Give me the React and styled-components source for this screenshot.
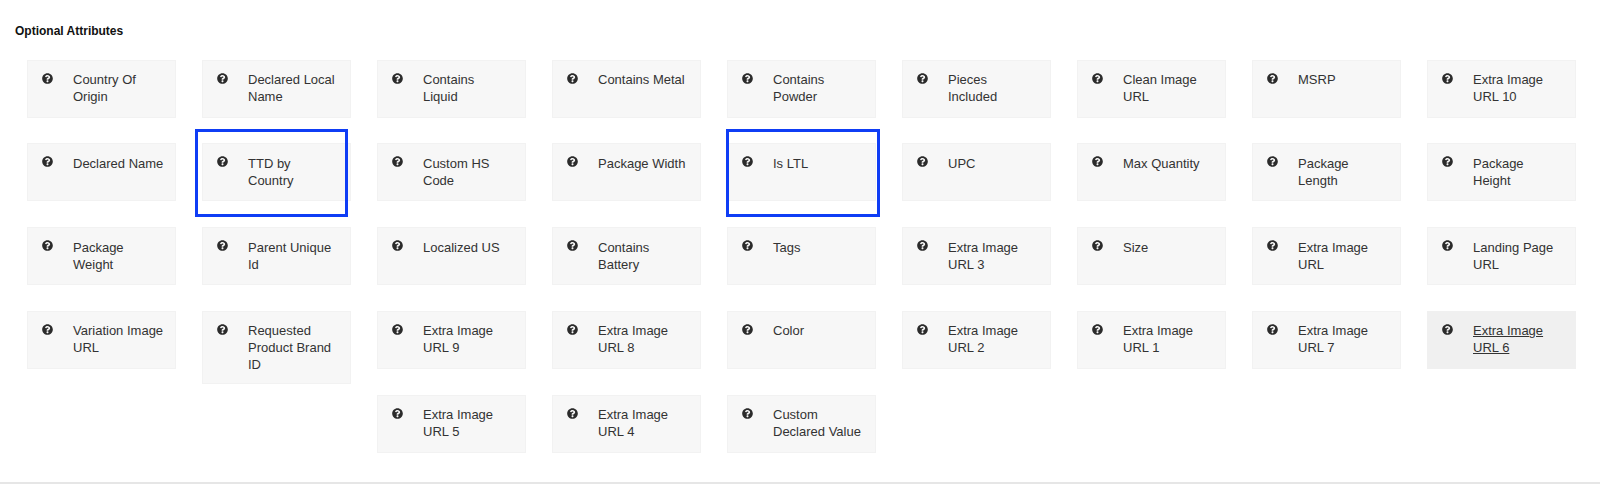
import styled, { createGlobalStyle } from "styled-components";
import { FaQuestionCircle } from "react-icons/fa";

const GlobalStyle = createGlobalStyle`
  html, body {
    margin: 0;
    background: #fff;
    font-family: "Liberation Sans", Arial, sans-serif;
  }
`;

const Page = styled.div`
  height: 486px;
  box-sizing: border-box;
  overflow: hidden;
  display: flex;
  flex-direction: column;
`;

const Title = styled.h2`
  margin: 0;
  padding: 24px 0 0 15px;
  height: 59.5px;
  box-sizing: border-box;
  font-size: 12px;
  line-height: 14px;
  font-weight: 700;
  color: #111;
`;

const Grid = styled.div`
  display: grid;
  grid-template-columns: repeat(9, 149px);
  grid-auto-rows: 58px;
  column-gap: 26px;
  row-gap: 25.8px;
  padding-left: 27px;
  flex: 1;
`;

const Card = styled.div`
  position: relative;
  align-self: start;
  grid-column: ${(p) => p.$column || "auto"};
  box-sizing: border-box;
  min-height: 58px;
  display: flex;
  gap: 20px;
  padding: 10.5px 11px 9.5px 14px;
  background: ${(p) => (p.$hovered ? "#f0f0f0" : "#f7f7f7")};
  border: 1px solid ${(p) => (p.$hovered ? "#f0f0f0" : "#f2f2f2")};
`;

const HelpIcon = styled(FaQuestionCircle)`
  flex: none;
  width: 11px;
  height: 11px;
  margin-top: 1.5px;
  color: #2b2b2b;
`;

const Label = styled.span`
  font-size: 13px;
  line-height: 17px;
  color: #333;
  white-space: pre-line;
  text-decoration: ${(p) => (p.$hovered ? "underline" : "none")};
`;

const Highlight = styled.div`
  position: absolute;
  top: -15px;
  bottom: -16.5px;
  left: ${(p) => p.$left}px;
  right: ${(p) => p.$right}px;
  border: 3px solid #0f3df5;
  pointer-events: none;
`;

const Footer = styled.div`
  height: 2px;
  margin-bottom: 2px;
  background: #e6e6e6;
`;

const attributes = [
  "Country Of Origin", "Declared Local Name", "Contains\nLiquid", "Contains Metal", "Contains Powder",
  "Pieces Included", "Clean Image URL", "MSRP", "Extra Image URL 10",
  "Declared Name", "TTD by Country", "Custom HS Code", "Package Width", "Is LTL",
  "UPC", "Max Quantity", "Package Length", "Package Height",
  "Package Weight", "Parent Unique Id", "Localized US", "Contains Battery", "Tags",
  "Extra Image URL 3", "Size", "Extra Image URL", "Landing Page URL",
  "Variation Image URL", "Requested Product Brand ID", "Extra Image URL 9", "Extra Image URL 8", "Color",
  "Extra Image URL 2", "Extra Image URL 1", "Extra Image URL 7", "Extra Image URL 6",
];

const lastRow = ["Extra Image URL 5", "Extra Image URL 4", "Custom Declared Value"];

// the blue boxes were drawn by hand on the screenshot, so they don't sit evenly on the card
const highlights = {
  "TTD by Country": { left: -8, right: 2 },
  "Is LTL": { left: -2, right: -5 },
};

const Attribute = ({ name, column }) => {
  const hovered = name === "Extra Image URL 6";
  const box = highlights[name];
  return (
    <Card $hovered={hovered} $column={column}>
      <HelpIcon />
      <Label $hovered={hovered}>{name}</Label>
      {box && <Highlight $left={box.left} $right={box.right} />}
    </Card>
  );
};

const App = () => {
  return (
    <>
      <GlobalStyle />
      <Page>
        <Title>Optional Attributes</Title>
        <Grid>
          {attributes.map((name) => (
            <Attribute key={name} name={name} />
          ))}
          {lastRow.map((name, i) => (
            <Attribute key={name} name={name} column={i + 3} />
          ))}
        </Grid>
        <Footer />
      </Page>
    </>
  );
};

export default App;
